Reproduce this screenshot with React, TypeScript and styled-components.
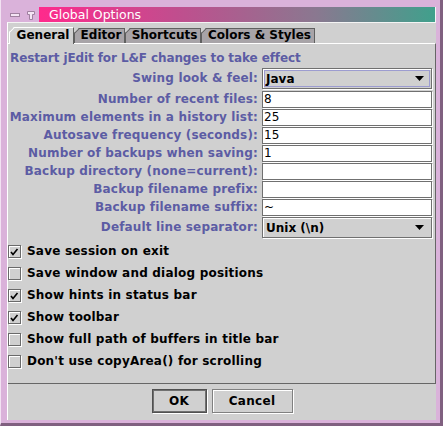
import React from 'react';
import styled, { createGlobalStyle } from 'styled-components';

const FONT = `"DejaVu Sans", "Liberation Sans", sans-serif`;

const Global = createGlobalStyle`
  html, body { margin: 0; padding: 0; background: #dab2da; }
  body { width: 443px; height: 426px; overflow: hidden; font-family: ${FONT}; }
  * { box-sizing: border-box; }
`;

const Window = styled.div`
  width: 443px;
  height: 426px;
  background: #dab2da;
  border-left: 1px solid #f2e2f2;
  border-right: 3px solid #806080;
  border-bottom: 3px solid #806080;
  padding: 7px 4px 3px 6px;
  display: flex;
  flex-direction: column;
`;

const TitleRow = styled.div`
  height: 15px;
  display: flex;
`;

const TitleIcons = styled.div`
  width: 32px;
  display: flex;
  align-items: center;
`;

const TitleBar = styled.div`
  flex: 1;
  background: linear-gradient(to right, #ff2a8c, #c04e8e 35%, #8a7890 70%, #40a08c);
  border-right: 1px solid #f4f4f4;
  color: #ffffff;
  font-family: ${FONT};
  font-size: 12.5px;
  line-height: 15px;
  padding-left: 10px;
  white-space: nowrap;
`;

const Content = styled.div`
  flex: 1;
  background: #d0d0d0;
  border-left: 1px solid #ffffff;
  border-top: 1px solid #f4f4f4;
  padding-top: 4px;
  display: flex;
  flex-direction: column;
`;

const TabStrip = styled.div`
  height: 17px;
  display: flex;
  align-items: flex-end;
  padding-left: 1px;
  position: relative;
  z-index: 1;
`;

const Tab = styled.div<{ $active?: boolean; $w: number }>`
  position: relative;
  width: ${(p) => p.$w}px;
  height: ${(p) => (p.$active ? 17 : 15)}px;
  margin-bottom: ${(p) => (p.$active ? 0 : 1)}px;
  padding-left: 3px;
  text-align: center;
  background: ${(p) => (p.$active ? '#d0d0d0' : '#a8a4a8')};
  border-top: 1px solid ${(p) => (p.$active ? '#ffffff' : '#606060')};
  border-left: 1px solid ${(p) => (p.$active ? '#ffffff' : '#606060')};
  border-right: 1px solid #606060;
  clip-path: polygon(5px 0, 100% 0, 100% 100%, 0 100%, 0 5px);
  color: #000;
  font-family: ${FONT};
  font-weight: bold;
  font-size: 12px;
  line-height: ${(p) => (p.$active ? 15 : 13)}px;
  white-space: nowrap;
  &::before {
    content: '';
    position: absolute;
    left: -1px;
    top: -1px;
    width: 7px;
    height: 1px;
    background: ${(p) => (p.$active ? '#ffffff' : '#606060')};
    transform-origin: 0 0;
    transform: translate(0, 5px) rotate(-45deg);
  }
`;

const Panel = styled.div`
  margin-top: -1px;
  height: 341px;
  border-top: 1px solid #ffffff;
  border-right: 1px solid #666666;
  border-bottom: 1px solid #666666;
  padding-top: 7px;
  display: flex;
  flex-direction: column;
`;

const Form = styled.div`
  display: grid;
  grid-template-columns: 250px 170px;
  grid-template-rows: 16px 22px repeat(7, 17px) 21px;
  column-gap: 4px;
  row-gap: 1px;
`;

const Heading = styled.div`
  grid-column: 1 / -1;
  padding-left: 2px;
  color: #5c5ca4;
  font-family: ${FONT};
  font-weight: bold;
  font-size: 12px;
  letter-spacing: -0.1px;
  line-height: 15px;
  white-space: nowrap;
`;

const Label = styled.div<{ $tall?: boolean }>`
  text-align: right;
  color: #5c5ca4;
  font-family: ${FONT};
  font-weight: bold;
  font-size: 12px;
  letter-spacing: 0.15px;
  line-height: ${(p) => (p.$tall ? 21 : 17)}px;
  white-space: nowrap;
`;

const Field = styled.div`
  height: 17px;
  background: #ffffff;
  border: 1px solid #707070;
  box-shadow: 1px 1px 0 #ffffff;
  padding-left: 1px;
  color: #000;
  font-family: ${FONT};
  font-size: 12px;
  line-height: 15px;
  white-space: nowrap;
`;

const Combo = styled.div<{ $focus?: boolean }>`
  height: 21px;
  background: #d0d0d0;
  border: 1px solid #707070;
  box-shadow: 1px 1px 0 #ffffff, inset 1px 1px 0 #ffffff;
  display: flex;
  align-items: center;
  justify-content: space-between;
  padding: 0 7px 0 3px;
  position: relative;
  color: #000;
  font-family: ${FONT};
  font-weight: bold;
  font-size: 12px;
  &::after {
    content: '';
    display: ${(p) => (p.$focus ? 'block' : 'none')};
    position: absolute;
    inset: 1px;
    border: 1px solid #9c9cd0;
  }
`;

const Arrow = () => (
  <svg width="9" height="5" viewBox="0 0 9 5">
    <polygon points="0,0 9,0 4.5,5" fill="#000" />
  </svg>
);

const Checks = styled.div`
  margin-top: 2px;
  display: flex;
  flex-direction: column;
`;

const CheckRow = styled.div`
  height: 22px;
  display: flex;
  align-items: center;
  gap: 6px;
  color: #000;
  font-family: ${FONT};
  font-weight: bold;
  font-size: 12px;
  letter-spacing: 0.2px;
  white-space: nowrap;
`;

const Box = styled.div`
  width: 13px;
  height: 13px;
  border: 1px solid #6a6a6a;
  background: #d0d0d0;
  box-shadow: inset 1px 1px 0 #ffffff, 1px 1px 0 #ffffff;
  display: flex;
  align-items: flex-end;
  justify-content: flex-start;
`;

const CheckMark = () => (
  <svg width="11" height="11" viewBox="0 0 11 11">
    <path d="M2 6 L4 8.5 L8.5 3" stroke="#000" strokeWidth="1.6" fill="none" />
  </svg>
);

const ButtonBar = styled.div`
  height: 36px;
  display: flex;
  justify-content: center;
  gap: 5px;
  padding-top: 5px;
`;

const Button = styled.div<{ $default?: boolean; $w: number }>`
  width: ${(p) => p.$w}px;
  height: 24px;
  border: 1px solid ${(p) => (p.$default ? '#505050' : '#808080')};
  box-shadow: 1px 1px 0 #ffffff,
    ${(p) => (p.$default ? 'inset 0 0 0 1px #707070' : 'inset 1px 1px 0 #ffffff')};
  display: flex;
  align-items: center;
  justify-content: center;
  color: #000;
  font-family: ${FONT};
  font-weight: bold;
  font-size: 12px;
  letter-spacing: 0.3px;
`;

const TitleGlyphs = () => (
  <svg width="32" height="15" viewBox="0 0 32 15">
    <rect x="3.5" y="6.5" width="9" height="3" fill="#f4e4f4" stroke="#a080a0" />
    <path d="M20.5 4.5 H27.5 V7.5 H25.5 V12.5 H22.5 V7.5 H20.5 Z" fill="#f4e4f4" stroke="#a080a0" />
  </svg>
);

const fields: [string, string][] = [
  ['Number of recent files:', '8'],
  ['Maximum elements in a history list:', '25'],
  ['Autosave frequency (seconds):', '15'],
  ['Number of backups when saving:', '1'],
  ['Backup directory (none=current):', ''],
  ['Backup filename prefix:', ''],
  ['Backup filename suffix:', '~'],
];

const checks: [string, boolean][] = [
  ['Save session on exit', true],
  ['Save window and dialog positions', false],
  ['Show hints in status bar', true],
  ['Show toolbar', true],
  ['Show full path of buffers in title bar', false],
  ["Don't use copyArea() for scrolling", false],
];

const tabs: [string, number][] = [
  ['General', 65],
  ['Editor', 51],
  ['Shortcuts', 76],
  ['Colors & Styles', 114],
];

export default function App() {
  return (
    <>
      <Global />
      <Window>
        <TitleRow>
          <TitleIcons>
            <TitleGlyphs />
          </TitleIcons>
          <TitleBar>Global Options</TitleBar>
        </TitleRow>
        <Content>
          <TabStrip>
            {tabs.map(([t, w], i) => (
              <Tab key={t} $w={w} $active={i === 0}>
                {t}
              </Tab>
            ))}
          </TabStrip>
          <Panel>
            <Form>
              <Heading>Restart jEdit for L&amp;F changes to take effect</Heading>
              <Label $tall>Swing look &amp; feel:</Label>
              <Combo $focus>
                <span>Java</span>
                <Arrow />
              </Combo>
              {fields.map(([l, v]) => (
                <React.Fragment key={l}>
                  <Label>{l}</Label>
                  <Field>{v}</Field>
                </React.Fragment>
              ))}
              <Label $tall>Default line separator:</Label>
              <Combo>
                <span>Unix (\n)</span>
                <Arrow />
              </Combo>
            </Form>
            <Checks>
              {checks.map(([l, c]) => (
                <CheckRow key={l}>
                  <Box>{c && <CheckMark />}</Box>
                  <span>{l}</span>
                </CheckRow>
              ))}
            </Checks>
          </Panel>
          <ButtonBar>
            <Button $default $w={55}>OK</Button>
            <Button $w={81}>Cancel</Button>
          </ButtonBar>
        </Content>
      </Window>
    </>
  );
}
